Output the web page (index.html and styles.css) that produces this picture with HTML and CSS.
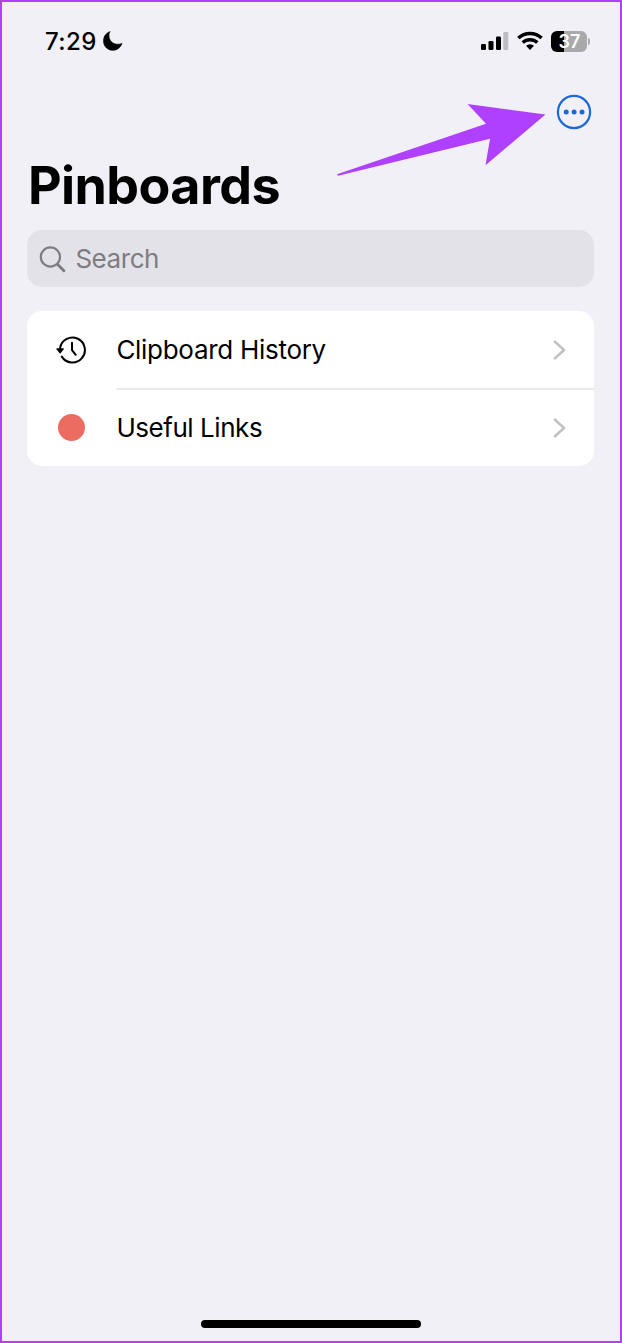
FILE: index.html
```html
<!DOCTYPE html>
<html lang="en">
<head>
<meta charset="utf-8">
<title>Pinboards</title>
<link rel="stylesheet" href="styles.css">
</head>
<body>
<div class="screen">
  <header class="status">
    <span class="time">7:29</span>
    <svg class="moon" width="20" height="20" viewBox="0 0 20 20"><path d="M7.100.600C6.200 2.100 6 3.200 6 4.700c0 4.800 3.700 8.500 8.500 8.500 1.600 0 3-.2 4.500-.8C17.500 16.500 14.200 19.300 10 19.300 4.500 19.300.5 15.300.5 9.900.5 5.500 3 2.100 7.100.600z" stroke="#000" stroke-width=".6" stroke-linejoin="round"/></svg>
    <svg class="signal" width="28" height="20" viewBox="0 0 28 20"><rect x="0" y="13" width="5" height="6" rx="1.200"/><rect x="7.500" y="10" width="5" height="9" rx="1.200"/><rect x="15" y="5.500" width="5" height="13.500" rx="1.200"/><rect x="22.300" y="1" width="5" height="18" rx="1.200" fill="#bdbdc1"/></svg>
    <svg class="wifi" width="26" height="20" viewBox="0 0 26 20"><g fill="none" stroke="#000" stroke-width="3.500"><path d="M1.400 7.100a16.700 16.700 0 0 1 23.200 0"/><path d="M5.700 11.600a10.500 10.500 0 0 1 14.600 0"/></g><path d="M13 19l-4-4.200a5.900 5.900 0 0 1 8 0z"/></svg>
    <span class="battery"><span class="cell">37</span><i class="tip"></i></span>
  </header>
  <div class="toolbar">
    <button class="more" aria-label="More"><svg width="36" height="36" viewBox="0 0 36 36"><circle cx="18" cy="18" r="16.100" fill="none" stroke="#1c68db" stroke-width="2.200"/><g fill="#1c68db"><circle cx="10.200" cy="18" r="2.500"/><circle cx="18.100" cy="18" r="2.500"/><circle cx="26" cy="18" r="2.500"/></g></svg></button>
    <svg class="pointer" width="212" height="76" viewBox="335 102 212 76"><path d="M337 174.300L486 123.700 467.500 104 545.500 114.500 485.500 165.300 490 138.800 338 175.700z" fill="#b040ff"/></svg>
  </div>
  <h1 class="title"><span>Pinboards</span></h1>
  <div class="search">
    <svg width="28" height="28" viewBox="0 0 28 28" fill="none" stroke="#7d7d82" stroke-linecap="round"><circle cx="11.400" cy="12" r="9.600" stroke-width="2.200"/><path d="M18.400 19.200l6.500 6.500" stroke-width="2.900"/></svg>
    <span>Search</span>
  </div>
  <ul class="list">
    <li class="row">
      <span class="lead"><svg width="32" height="28" viewBox="0 0 32 28" fill="none" stroke="#000" stroke-width="2" stroke-linecap="round" stroke-linejoin="round"><path d="M5.100 11.800A12.500 12.500 0 1 1 6.800 20.600"/><path d="M17 6.800v7.300l3.700 4.700"/><path d="M1.900 12.900h6.400L5.100 16.800z" fill="#000" stroke-width="1.200"/></svg></span>
      <span class="label history">Clipboard History</span>
      <svg class="chev" width="14" height="20" viewBox="0 0 14 20"><path d="M2 1.700l9 8.300-9 8.300"/></svg>
    </li>
    <li class="row">
      <span class="lead"><i class="dot"></i></span>
      <span class="label links">Useful Links</span>
      <svg class="chev" width="14" height="20" viewBox="0 0 14 20"><path d="M2 1.700l9 8.300-9 8.300"/></svg>
    </li>
  </ul>
  <div class="home"></div>
</div>
</body>
</html>
```
FILE: styles.css
```css
* { box-sizing: border-box; }
body { margin: 0; font-family: Inter, "Liberation Sans", sans-serif; color: #000; }
.screen { display: flex; flex-direction: column; width: 622px; height: 1343px; padding: 0 25.6px 13px 25.4px; border: 2px solid #b040ff; background: #f1f0f6; }
.status { display: flex; align-items: center; height: 78px; padding: 0 4px 0 17.5px; }
.time { width: 58px; padding-top: 2px; font-size: 24px; font-weight: 500; line-height: 30px; letter-spacing: 0.5px; white-space: nowrap; }
.signal { margin: 0 8px 0 auto; }
.battery { display: flex; align-items: center; gap: 1px; margin-left: 8.5px; }
.cell { width: 36px; height: 21px; border-radius: 6px; background: linear-gradient(90deg, #000 13px, #a9a9ab 13px); color: #fff; font-size: 18px; font-weight: 600; line-height: 21px; text-align: center; }
.tip { width: 2px; height: 7px; border-radius: 0 2px 2px 0; background: #a9a9ab; }
.toolbar { position: relative; display: flex; justify-content: flex-end; align-items: center; height: 63px; padding-right: 2.4px; }
.more { display: flex; padding: 0; border: 0; background: none; }
.pointer { position: absolute; left: 307.6px; top: 22px; }
.title { height: 87.3px; margin: 0; padding-left: 0.6px; font-size: 52px; font-weight: 700; line-height: 85px; letter-spacing: -0.6px; white-space: nowrap; }
.search { display: flex; align-items: center; gap: 8px; height: 57px; padding-left: 12px; border-radius: 15px; background: #e3e2e8; color: #7d7d82; font-size: 26px; line-height: 32px; letter-spacing: -0.45px; }
.search span { padding-top: 1px; }
.list { margin: 24px 0 0; padding: 0; border-radius: 15px; background: #fff; list-style: none; }
.row { position: relative; display: flex; align-items: center; height: 78px; padding-right: 27.5px; }
.row + .row { height: 77px; }
.row + .row::before { content: ""; position: absolute; left: 88.6px; right: 0; top: -1px; height: 2px; background: #ebebed; }
.lead { display: flex; justify-content: center; width: 88px; }
.label { flex: 1; padding-left: 1px; font-size: 26px; line-height: 32px; letter-spacing: -0.29px; white-space: nowrap; }
.links { letter-spacing: -0.45px; }
.dot { width: 27px; height: 27px; border-radius: 50%; background: #ec6c62; }
.chev { fill: none; stroke: #c2c2c5; stroke-width: 2.6; stroke-linecap: round; stroke-linejoin: round; }
.home { width: 220px; height: 8px; margin: auto auto 0; border-radius: 4px; background: #000; }
```
